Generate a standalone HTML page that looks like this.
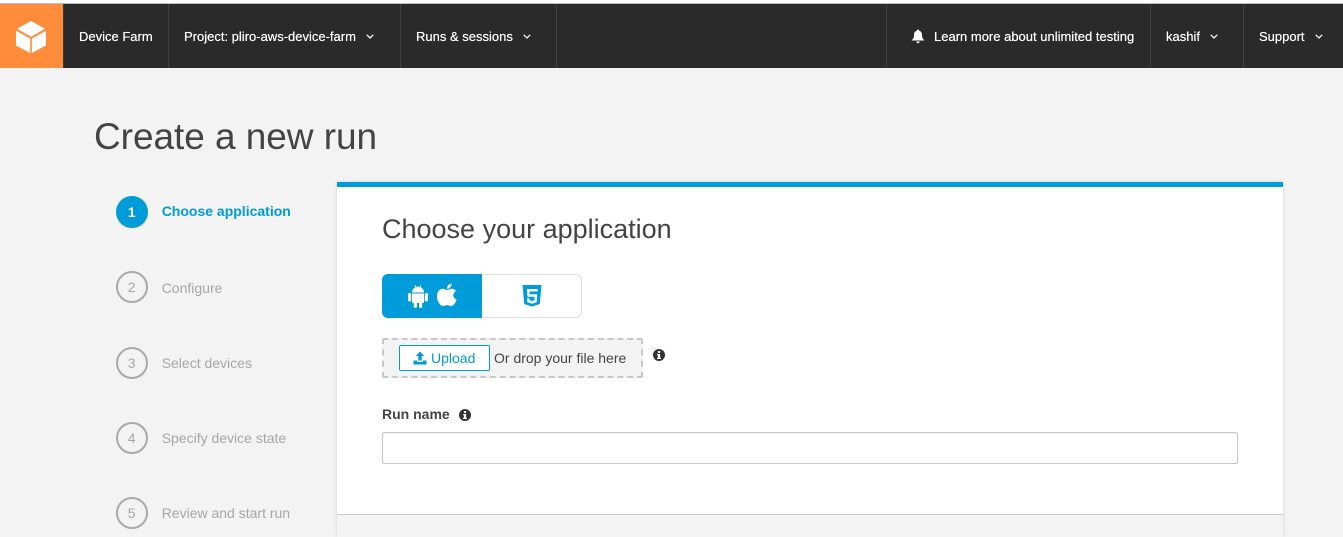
<!DOCTYPE html>
<html>
<head>
<meta charset="utf-8">
<style>
html,body{margin:0;padding:0;}
body{width:1343px;height:537px;overflow:hidden;background:#f3f3f3;font-family:"Liberation Sans",Arial,sans-serif;position:relative;color:#444;}
.a{position:absolute;white-space:nowrap;}
#top{left:0;top:0;width:1343px;height:3px;background:#fff;border-bottom:1px solid #bbb;}
#nav{left:0;top:4px;width:1343px;height:64px;background:#2a2a2a;}
#logo{left:0;top:4px;width:63px;height:64px;background:#ff8c3b;}
.sep{position:absolute;top:4px;width:1px;height:64px;background:#414141;}
.nt{position:absolute;top:29px;color:#fff;font-size:13px;line-height:16px;white-space:nowrap;text-shadow:0 0 .5px #fff;}
.circ{position:absolute;left:115.6px;width:32px;height:32px;box-sizing:border-box;border-radius:50%;border:2px solid #a9a9a9;color:#a6a6a6;font-size:14px;line-height:28px;text-align:center;}
.sl{position:absolute;left:161.7px;color:#a6a6a6;font-size:14px;line-height:18px;white-space:nowrap;}
</style>
</head>
<body>
<div class="a" id="top"></div>
<div class="a" id="nav"></div>
<div class="a" id="logo"></div>
<svg class="a" style="left:15px;top:20px" width="32" height="34" viewBox="0 0 32 34">
<path d="M16 1 L30 8.8 L16 16.8 L2 8.8 Z" fill="#fff"/>
<path d="M1 10.8 L15.2 18.6 L15.2 33 L1 25.5 Z" fill="#fff"/>
<path d="M31 10.8 L16.8 18.6 L16.8 33 L31 25.5 Z" fill="#fff"/>
</svg>
<div class="sep" style="left:63px;background:#3a3a3a"></div>
<div class="sep" style="left:168px"></div>
<div class="sep" style="left:400px"></div>
<div class="sep" style="left:556px"></div>
<div class="sep" style="left:886px"></div>
<div class="sep" style="left:1150px"></div>
<div class="sep" style="left:1243px"></div>

<div class="nt" style="left:79px">Device Farm</div>
<div class="nt" style="left:184px">Project: pliro-aws-device-farm</div>
<svg class="a" style="left:365px;top:33px" width="10" height="7" viewBox="0 0 10 7"><path d="M1.8 1.8 L5 5 L8.2 1.8" fill="none" stroke="#fff" stroke-width="1.3"/></svg>
<div class="nt" style="left:416px">Runs &amp; sessions</div>
<svg class="a" style="left:522px;top:33px" width="10" height="7" viewBox="0 0 10 7"><path d="M1.8 1.8 L5 5 L8.2 1.8" fill="none" stroke="#fff" stroke-width="1.3"/></svg>
<svg class="a" style="left:911px;top:29px" width="14" height="15" viewBox="0 0 14 15"><path d="M7 0.5 C7.7 .5 8 1 8 1.6 C10.2 2.2 11 4 11 6 C11 8.8 12 10 13.5 11.5 L.5 11.5 C2 10 3 8.8 3 6 C3 4 3.8 2.2 6 1.6 C6 1 6.3 .5 7 .5 Z M5.3 12.5 L8.7 12.5 C8.6 13.6 7.9 14.3 7 14.3 C6.1 14.3 5.4 13.6 5.3 12.5 Z" fill="#fff"/></svg>
<div class="nt" style="left:934px">Learn more about unlimited testing</div>
<div class="nt" style="left:1166px">kashif</div>
<svg class="a" style="left:1209px;top:33px" width="10" height="7" viewBox="0 0 10 7"><path d="M1.8 1.8 L5 5 L8.2 1.8" fill="none" stroke="#fff" stroke-width="1.3"/></svg>
<div class="nt" style="left:1259px">Support</div>
<svg class="a" style="left:1314px;top:33px" width="10" height="7" viewBox="0 0 10 7"><path d="M1.8 1.8 L5 5 L8.2 1.8" fill="none" stroke="#fff" stroke-width="1.3"/></svg>

<div class="a" style="left:94px;top:115px;font-size:37px;line-height:44px;color:#444;letter-spacing:-.05px">Create a new run</div>

<div class="circ" style="top:196px;background:#009cd9;border-color:#009cd9;color:#fff;font-weight:bold">1</div>
<div class="sl" style="top:202px;color:#009cd9;font-weight:bold">Choose application</div>
<div class="circ" style="top:271px">2</div>
<div class="sl" style="top:279px">Configure</div>
<div class="circ" style="top:347px">3</div>
<div class="sl" style="top:354px">Select devices</div>
<div class="circ" style="top:422px">4</div>
<div class="sl" style="top:429px">Specify device state</div>
<div class="circ" style="top:497px">5</div>
<div class="sl" style="top:504px">Review and start run</div>

<div class="a" style="left:337px;top:182px;width:946px;height:355px;background:#fff;box-shadow:0 0 4px rgba(0,0,0,.12)"></div>
<div class="a" style="left:337px;top:182px;width:946px;height:5px;background:#009cd9"></div>
<div class="a" style="left:337px;top:514px;width:946px;height:23px;background:#f3f3f3;border-top:1px solid #ccc;box-sizing:border-box"></div>

<div class="a" style="left:382px;top:213px;font-size:27px;line-height:32px;color:#444">Choose your application</div>

<div class="a" style="left:382px;top:274px;width:200px;height:44px;box-sizing:border-box;border:1px solid #e0e0e0;border-radius:6px;background:#fff"></div>
<div class="a" style="left:382px;top:274px;width:100px;height:44px;background:#009cd9;border-radius:6px 0 0 6px"></div>
<svg class="a" style="left:408px;top:284px" width="20" height="24" viewBox="0 0 20 24">
<path d="M4 8.5 C4 5 7 2.5 10 2.5 C13 2.5 16 5 16 8.5 Z" fill="#fff"/>
<path d="M7 1 L7.8 3 M13 1 L12.2 3" stroke="#fff" stroke-width=".8"/>
<path d="M4 9.5 H16 V18 C16 18.8 15.5 19 15 19 H5 C4.5 19 4 18.8 4 18 Z" fill="#fff"/>
<rect x="0" y="9" width="3.2" height="8.5" rx="1.6" fill="#fff"/>
<rect x="16.8" y="9" width="3.2" height="8.5" rx="1.6" fill="#fff"/>
<rect x="5.8" y="18" width="3.2" height="6" rx="1.6" fill="#fff"/>
<rect x="11" y="18" width="3.2" height="6" rx="1.6" fill="#fff"/>
</svg>
<svg class="a" style="left:436px;top:283px" width="22" height="24" viewBox="0 0 22 25">
<path d="M11 7.2 C12.5 7.2 14 6 16 6 C17.8 6 19.4 7 20.3 8.5 C18.3 9.7 17.5 11.2 17.6 13 C17.7 15 19 16.4 21 17.2 C20 20.3 17.8 24 15.6 24 C14 24 13 23 11.3 23 C9.5 23 8.5 24 7 24 C4 24 .5 18.5 .5 14 C.5 9 3.5 6 6.8 6 C8.5 6 9.8 7.2 11 7.2 Z" fill="#fff"/>
<path d="M11 6 C10.8 3.5 12.8 .8 15.8 .5 C16 3.2 13.8 6 11 6 Z" fill="#fff"/>
</svg>
<svg class="a" style="left:522px;top:285px" width="20" height="22" viewBox="0 0 20 22">
<path fill-rule="evenodd" d="M0.5 0 H19.5 L17.8 19 L10 21.5 L2.2 19 Z M4.8 4 L5.5 11.8 H12.6 L12.3 15.2 L10 16 L7.7 15.2 L7.5 13.3 H5 L5.4 17.2 L10 18.7 L14.6 17.2 L15.3 9.3 H7.6 L7.4 6.5 H15.5 L15.7 4 Z" fill="#009cd9"/>
</svg>

<div class="a" style="left:382px;top:338px;width:261px;height:40px;box-sizing:border-box;border:2px dashed #c8c8c8;border-radius:2px;background:#f3f3f3"></div>
<div class="a" style="left:399px;top:345px;width:91px;height:26px;box-sizing:border-box;border:1px solid #009cd9;border-radius:2px;background:#fff"></div>
<svg class="a" style="left:413px;top:351px" width="14" height="14" viewBox="0 0 14 14">
<path d="M7 0.5 L11.2 5 H8.7 V9.5 H5.3 V5 H2.8 Z" fill="#009cd9"/>
<path d="M0.5 9.5 H4 V11 H10 V9.5 H13.5 V13.5 H0.5 Z" fill="#009cd9"/>
</svg>
<div class="a" style="left:431px;top:350px;font-size:14px;line-height:17px;color:#009cd9">Upload</div>
<div class="a" style="left:494px;top:350px;font-size:14px;line-height:17px;color:#444">Or drop your file here</div>
<svg class="a" style="left:653px;top:349px" width="12" height="12" viewBox="0 0 12 12"><circle cx="6" cy="6" r="6" fill="#333"/><rect x="4.9" y="2" width="2.2" height="1.9" fill="#fff"/><path d="M4 5 H7.1 V8.8 H8 V10 H4 V8.8 H4.9 V6.2 H4 Z" fill="#fff"/></svg>

<div class="a" style="left:382px;top:406px;font-size:14px;line-height:17px;font-weight:bold;color:#444">Run name</div>
<svg class="a" style="left:459px;top:409px" width="12" height="12" viewBox="0 0 12 12"><circle cx="6" cy="6" r="6" fill="#333"/><rect x="4.9" y="2" width="2.2" height="1.9" fill="#fff"/><path d="M4 5 H7.1 V8.8 H8 V10 H4 V8.8 H4.9 V6.2 H4 Z" fill="#fff"/></svg>
<div class="a" style="left:382px;top:432px;width:856px;height:32px;box-sizing:border-box;border:1px solid #c8c8c8;border-radius:2px;background:#fff;box-shadow:inset 0 1px 1px rgba(0,0,0,.05)"></div>
</body>
</html>
